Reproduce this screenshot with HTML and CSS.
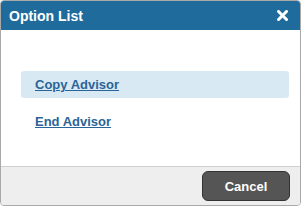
FILE: index.html
```html
<!DOCTYPE html>
<html lang="en">
<head>
    <meta charset="UTF-8">
    <title>Option List</title>
    <link rel="stylesheet" href="styles.css">
</head>
<body>
    <div class="dialogo">
        <div class="cabecera">
            <span class="titulo">Option List</span>
            <svg class="cerrar" width="11" height="11" viewBox="0 0 11 11">
                <path d="M1.5 1.5 L9.5 9.5 M9.5 1.5 L1.5 9.5" stroke="white" stroke-width="3" stroke-linecap="square"/>
            </svg>
        </div>
        <div class="cuerpo">
            <div class="opcion activa"><a href="#">Copy Advisor</a></div>
            <div class="opcion"><a href="#">End Advisor</a></div>
        </div>
        <div class="pie">
            <button class="cancelar">Cancel</button>
        </div>
    </div>
</body>
</html>
```
FILE: styles.css
```css
*{
    margin: 0;
    padding: 0;
    box-sizing: border-box;
}
body{
    font-family: "Liberation Sans", Arial, sans-serif;
    background: #fff;
}
.dialogo{
    width: 301px;
    height: 206px;
    border: 1px solid #a9a9a9;
    border-radius: 4px;
    overflow: hidden;
    display: flex;
    flex-direction: column;
}
.cabecera{
    height: 29px;
    background: #1f6b9c;
    color: white;
    display: flex;
    align-items: center;
    justify-content: space-between;
    padding: 0 12px 0 8px;
}
.titulo{
    font-size: 14px;
    font-weight: bold;
}
.cerrar{
    display: block;
}
.cuerpo{
    flex: 1;
    background: white;
    padding: 41px 11px 0 20px;
    border-bottom: 1px solid #cfcfcf;
}
.opcion{
    height: 27px;
    display: flex;
    align-items: center;
    padding-left: 14px;
    margin-bottom: 10px;
    border-radius: 3px;
}
.activa{
    background: #d9e9f3;
}
.opcion a{
    color: #2a6496;
    font-size: 13px;
    font-weight: bold;
}
.pie{
    height: 38px;
    background: #eeeeee;
    display: flex;
    align-items: center;
    justify-content: flex-end;
    padding-right: 10px;
}
.cancelar{
    width: 88px;
    height: 30px;
    background: #555555;
    border: 1px solid #333;
    border-radius: 6px;
    color: white;
    font-family: "Liberation Sans", Arial, sans-serif;
    font-size: 13px;
    font-weight: bold;
}
```
